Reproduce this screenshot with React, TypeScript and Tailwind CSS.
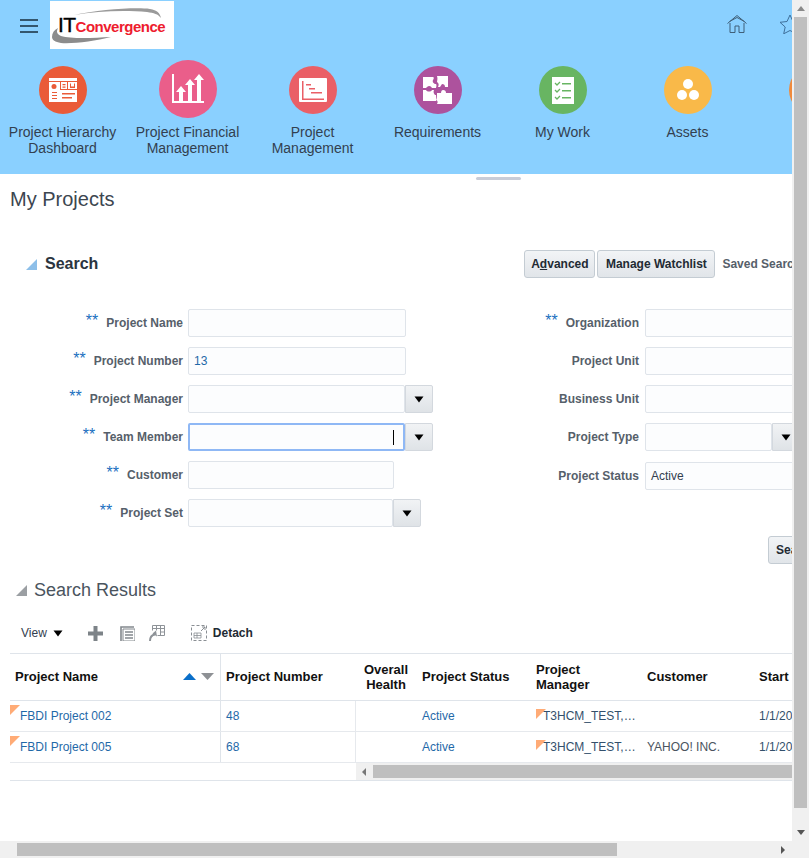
import type { ReactNode } from "react";

const font = "font-['Liberation_Sans',Arial,sans-serif]";

function NavItem({ label, color, big, children }: { label: string[]; color: string; big?: boolean; children: ReactNode }) {
  return (
    <div className="flex w-[125px] shrink-0 flex-col items-center">
      <div className="flex h-[58px] items-center justify-center">
        <div className={`flex items-center justify-center rounded-full ${color} ${big ? "-mt-[2px] h-[58px] w-[58px]" : "h-[48px] w-[48px]"}`}>
          {children}
        </div>
      </div>
      <div className="mt-[5px] text-center text-sm leading-4 text-[#33404f]">
        {label.map((l) => (
          <div key={l} className="whitespace-nowrap">{l}</div>
        ))}
      </div>
    </div>
  );
}

function Caret({ color = "#000" }: { color?: string }) {
  return (
    <svg width="10" height="7" viewBox="0 0 10 7">
      <path d="M0.5 0.5h9L5 6.500z" fill={color} />
    </svg>
  );
}

function Field({ label, stars, value, labelWidth, inputWidth, dropdown, focused }: {
  label: string;
  stars?: boolean;
  value?: string;
  labelWidth: string;
  inputWidth: string;
  dropdown?: boolean;
  focused?: boolean;
}) {
  return (
    <div className="flex h-[28px] items-center">
      <div className={`flex shrink-0 items-center justify-end whitespace-nowrap text-xs font-bold text-[#56606a] ${labelWidth}`}>
        {stars && <span className="mr-[8px] -mt-[5px] text-base leading-4 font-normal text-[#1a6fc0]">**</span>}
        {label}
      </div>
      <div className={`ml-[5px] flex h-[28px] shrink-0 items-center rounded-[2px] border bg-[#fcfdfe] px-[5px] text-xs ${inputWidth} ${focused ? "justify-end border-2 border-[#8fb8f5] pr-[9px]" : "border-[#dfe4ea]"} ${value === "13" ? "text-[#1f69a8]" : "text-[#33404f]"}`}>
        {value}
        {focused && <span className="h-[15px] w-px bg-black" />}
      </div>
      {dropdown && (
        <div className="flex h-[28px] w-[28px] shrink-0 items-center justify-center rounded-r-[2px] border border-[#d3d8de] bg-gradient-to-b from-[#f1f3f5] to-[#dfe3e7]">
          <Caret />
        </div>
      )}
    </div>
  );
}

function Corner({ className }: { className: string }) {
  return (
    <svg width="10" height="10" viewBox="0 0 10 10" className={`absolute ${className}`}>
      <path d="M0 0h10L0 10z" fill="#ffab76" />
    </svg>
  );
}

const rows = [
  { name: "FBDI Project 002", num: "48", customer: "" },
  { name: "FBDI Project 005", num: "68", customer: "YAHOO! INC." },
];

export default function App() {
  return (
    <div className={`flex h-[858px] w-[809px] flex-col overflow-hidden bg-white ${font}`}>
      <div className="flex min-h-0 flex-1">
        <div className="w-[792px] shrink-0 overflow-hidden">
          {/* top banner */}
          <header className="h-[174px] overflow-hidden bg-[#8ad0ff]">
            <div className="flex h-[61px] items-start">
              <button className="ml-[20px] mt-[19px] flex w-[18px] flex-col gap-[4px]">
                <span className="h-[2px] w-[18px] bg-[#33566e]" />
                <span className="h-[2px] w-[18px] bg-[#33566e]" />
                <span className="h-[2px] w-[18px] bg-[#33566e]" />
              </button>
              <div className="relative ml-[12px] mt-px flex h-[48px] w-[124px] items-center justify-center overflow-hidden bg-white">
                <svg width="124" height="48" viewBox="0 0 124 48" className="absolute left-0 top-0">
                  <path d="M24 14C48 9 84 6 100 8c7 1 10 4 11 9-3-4-7-5-14-6-22-2-50-1-73 3z" fill="#9a9a9a" />
                  <path d="M2 36c0-4 2-7 6-9-2 4-1 6 3 8 10 3 32 2 50 1-16 4-38 7-50 6-6-1-9-3-9-6z" fill="#8c8c8c" />
                </svg>
                <div className="relative -mt-[1px] ml-[-1px] flex items-baseline whitespace-nowrap text-[15px] font-bold tracking-[-0.5px]">
                  <span className="text-[21px] font-normal text-black [-webkit-text-stroke:0.4px_black]">IT</span>
                  <span className="text-[#ee1c2e]">Convergence</span>
                </div>
              </div>
              <div className="ml-auto mr-[-10px] mt-[14px] flex gap-[30px]">
                <svg width="22" height="20" viewBox="0 0 22 20" fill="none" stroke="#3f5f78" strokeWidth="1">
                  <path d="M1.500 9.500 11 1.500l9.500 8M3.500 7.500 11 3.500l7.500 4M4 9v9.500h5V12h4v6.500h5V9" />
                </svg>
                <svg width="24" height="20" viewBox="0 0 24 20" fill="none" stroke="#3f6f9a" strokeWidth="1">
                  <path d="M12 1l3 6.500 7 .8-5.200 4.700 1.500 6.800L12 16.500 5.700 19.800l1.500-6.800L2 8.300l7-.8z" />
                </svg>
              </div>
            </div>
            <nav className="flex">
              <NavItem label={["Project Hierarchy", "Dashboard"]} color="bg-[#ea5b38]">
                <svg width="28" height="24" viewBox="0 0 28 24">
                  <path d="M0 0h28v24H0z" fill="#fff" />
                  <path d="M0 3h28v1H0zM11 4h1v8h-1zM18 4h1v7h-1zM11 11h17v1H11z" fill="#ea5b38" />
                  <circle cx="5" cy="8.500" r="2.500" fill="#ea5b38" />
                  <path d="M3 14h5v1H3zM3 17h5v1H3zM3 20h5v1H3zM13.500 6h3v1.200h-3zM13.500 8.500h3v1.200h-3zM21 5.500h1v3h3v-3h1v4.500h-5zM13 15h13v1.500H13zM13 19h10v1.500H13z" fill="#ea5b38" />
                </svg>
              </NavItem>
              <NavItem label={["Project Financial", "Management"]} color="bg-[#ea5e8a]" big>
                <svg width="32" height="30" viewBox="0 0 32 30">
                  <path d="M0 0h2v27h30v2H0z" fill="#fff" />
                  <path d="M9 12l5 6h-3v9H7v-9H4zM18 5l5 6h-3v16h-4V11h-3zM27 0l5 6h-3v21h-4V6h-3z" fill="#fff" />
                </svg>
              </NavItem>
              <NavItem label={["Project", "Management"]} color="bg-[#ea5f66]">
                <svg width="28" height="24" viewBox="0 0 28 24">
                  <path d="M0 1a1 1 0 0 1 1-1h26a1 1 0 0 1 1 1v22a1 1 0 0 1-1 1H1a1 1 0 0 1-1-1z" fill="#fff" />
                  <path d="M3 3h1.500v17.500H25V22H3zM7 6h5v1.500H7zM10 10h6v1.500h-6zM12 14h11v1.500H12z" fill="#ea5f66" />
                </svg>
              </NavItem>
              <NavItem label={["Requirements"]} color="bg-[#ad529d]">
                <svg width="29" height="28" viewBox="0 0 29 28" fill="#fff">
                  <path d="M0 1h10c1 0 1 2 0 3-1 2 1 4 3 4 1 1 0 4 0 4H9c-1-2-3-3-5-1l-1 1H0z" />
                  <path d="M14 0h11v11h-3c0-2-1-3-3-3l-2 3h-2c1-2 1-4-1-5 0-2 1-3 0-6z" />
                  <path d="M0 14h3c1 2 5 2 6 0h2c-1 2 0 4 1 5h1v6H0z" />
                  <path d="M14 17h4c0-2 1-3 2-3 2 0 3 1 3 3h6v11H14c1-2 1-3-1-4 1-1 1-5 1-7z" />
                </svg>
              </NavItem>
              <NavItem label={["My Work"]} color="bg-[#68b562]">
                <svg width="22" height="27" viewBox="0 0 22 27">
                  <path d="M0 0h22v27H0z" fill="#fff" />
                  <path d="M3 6l2 2 3-3M3 13l2 2 3-3M3 20l2 2 3-3" fill="none" stroke="#68b562" strokeWidth="1.300" />
                  <path d="M10 6h9v1.500h-9zM10 13h9v1.500h-9zM10 20h9v1.500h-9z" fill="#68b562" />
                </svg>
              </NavItem>
              <NavItem label={["Assets"]} color="bg-[#f9b949]">
                <svg width="22" height="22" viewBox="0 0 22 22" fill="#fff">
                  <circle cx="11" cy="5" r="5" />
                  <circle cx="5" cy="16" r="5" />
                  <circle cx="17" cy="16" r="5" />
                </svg>
              </NavItem>
              <NavItem label={[""]} color="bg-[#f08a3c]">
                <span />
              </NavItem>
            </nav>
          </header>

          {/* splitter handle */}
          <div className="flex h-[6px] items-start pl-[476px] pt-[3px]">
            <div className="h-[3px] w-[45px] rounded-full bg-[#c8ccd8]" />
          </div>

          <main className="pl-[10px]">
            <h1 className="mt-[7px] text-xl leading-[24px] text-[#3c4650]">My Projects</h1>

            {/* search header */}
            <div className="mt-[39px] flex h-[28px] items-center">
              <svg width="11" height="11" viewBox="0 0 11 11" className="ml-[16px] mt-[1px] shrink-0">
                <path d="M11 0v11H0z" fill="#8dbfe9" />
              </svg>
              <h2 className="ml-[8px] text-base font-bold text-[#2b3440]">Search</h2>
              <div className="ml-[426px] flex shrink-0 items-center whitespace-nowrap text-xs font-bold text-[#222a33]">
                <button className="h-[28px] w-[71px] rounded-[3px] border border-[#c4ccd3] bg-gradient-to-b from-[#f2f4f6] to-[#e1e5e9]">
                  A<span className="underline">d</span>vanced
                </button>
                <button className="ml-[2px] h-[28px] w-[118px] rounded-[3px] border border-[#c4ccd3] bg-gradient-to-b from-[#f2f4f6] to-[#e1e5e9]">
                  Manage Watchlist
                </button>
                <span className="ml-[7px] text-[#56606a]">Saved Search</span>
              </div>
            </div>

            {/* search form */}
            <div className="mt-[31px] flex">
              <div className="flex w-[430px] shrink-0 flex-col gap-[10px]">
                <Field label="Project Name" stars labelWidth="w-[173px]" inputWidth="w-[218px]" />
                <Field label="Project Number" stars value="13" labelWidth="w-[173px]" inputWidth="w-[218px]" />
                <Field label="Project Manager" stars labelWidth="w-[173px]" inputWidth="w-[217px]" dropdown />
                <Field label="Team Member" stars labelWidth="w-[173px]" inputWidth="w-[217px]" dropdown focused />
                <Field label="Customer" stars labelWidth="w-[173px]" inputWidth="w-[206px]" />
                <Field label="Project Set" stars labelWidth="w-[173px]" inputWidth="w-[205px]" dropdown />
              </div>
              <div className="flex shrink-0 flex-col gap-[10px]">
                <Field label="Organization" stars labelWidth="w-[200px] pr-[1px]" inputWidth="w-[218px]" />
                <Field label="Project Unit" labelWidth="w-[200px] pr-[1px]" inputWidth="w-[218px]" />
                <Field label="Business Unit" labelWidth="w-[200px] pr-[1px]" inputWidth="w-[218px]" />
                <Field label="Project Type" labelWidth="w-[200px] pr-[1px]" inputWidth="w-[127px]" dropdown />
                <div className="mt-px">
                  <Field label="Project Status" value="Active" labelWidth="w-[200px] pr-[1px]" inputWidth="w-[218px]" />
                </div>
              </div>
            </div>

            <div className="mt-[9px] flex justify-end">
              <button className="-mr-[26px] h-[28px] w-[50px] rounded-[3px] border border-[#c4ccd3] bg-gradient-to-b from-[#f2f4f6] to-[#e1e5e9] pl-[7px] text-left text-xs font-bold text-[#222a33]">
                Search
              </button>
            </div>

            {/* results */}
            <div className="mt-[14px] flex h-[24px] items-center">
              <svg width="11" height="11" viewBox="0 0 11 11" className="ml-[6px] shrink-0">
                <path d="M11 0v11H0z" fill="#9b9fa3" />
              </svg>
              <h2 className="ml-[7px] text-lg text-[#4a545e]">Search Results</h2>
            </div>

            <div className="mt-[20px] flex h-[22px] items-center text-xs">
              <span className="ml-[11px] text-[#33404f]">View</span>
              <span className="ml-[6px] flex"><Caret /></span>
              <svg width="15" height="15" viewBox="0 0 15 15" className="ml-[25px] shrink-0">
                <path d="M5.500 0h4v5.500H15v4H9.500V15h-4V9.500H0v-4h5.500z" fill="#7d8388" />
              </svg>
              <svg width="15" height="15" viewBox="0 0 15 15" className="ml-[17px] shrink-0" fill="none" stroke="#83888d">
                <path d="M1 15V1h13" strokeWidth="1.600" />
                <path d="M3 3h12v12H3z" strokeWidth="1" />
                <path d="M5 6h8M5 9h8M5 12h8" strokeWidth="1.500" />
              </svg>
              <svg width="16" height="17" viewBox="0 0 16 17" className="ml-[14px] shrink-0" fill="none" stroke="#8e9398" strokeWidth="1">
                <path d="M3.500 .5h12v10h-7M3.500 .5v5M3.500 3.500h12M7.500 .5v5M11.500 .5v10M11.500 7h4" />
                <path d="M1 16c0-4 2-6 5-6.500" strokeWidth="2" />
                <path d="M3.500 8.500 7 5.500l1 6z" fill="#8e9398" stroke="none" />
              </svg>
              <svg width="16" height="16" viewBox="0 0 16 16" className="ml-[26px] shrink-0" fill="none" stroke="#8a8f94">
                <path d="M.5 .5h15v15H.5z" strokeDasharray="3 2" />
                <path d="M10 6l4-4M11 2h3v3" />
                <path d="M3 8h7v5H3zM3 10.500h7M6 8v5" strokeWidth=".8" />
              </svg>
              <span className="ml-[6px] font-bold text-[#222a33]">Detach</span>
            </div>

            {/* results table */}
            <div className="mt-[9px] w-[840px] border-t border-[#dfe4ea]">
              <div className="flex h-[47px] items-center border-b border-[#dfe4ea] text-[13px] leading-[15px] font-bold text-[#111]">
                <div className="flex h-full w-[211px] shrink-0 items-center border-r border-[#dfe4ea] pb-[2px] pl-[5px]">
                  Project Name
                  <span className="ml-auto mr-[6px] flex items-center gap-[5px]">
                    <svg width="13" height="7" viewBox="0 0 13 7"><path d="M6.500 0 13 7H0z" fill="#0a6fc9" /></svg>
                    <svg width="13" height="7" viewBox="0 0 13 7"><path d="M0 0h13L6.500 7z" fill="#8e9195" /></svg>
                  </span>
                </div>
                <div className="w-[135px] shrink-0 pb-[2px] pl-[5px]">Project Number</div>
                <div className="w-[60px] shrink-0 text-center">Overall<br />Health</div>
                <div className="w-[114px] shrink-0 pb-[2px] pl-[6px]">Project Status</div>
                <div className="w-[111px] shrink-0 pl-[6px]">Project<br />Manager</div>
                <div className="w-[112px] shrink-0 pb-[2px] pl-[6px]">Customer</div>
                <div className="pb-[2px] pl-[6px]">Start</div>
              </div>
              {rows.map((r) => (
                <div key={r.name} className="flex h-[31px] items-center border-b border-[#e6e9ed] text-xs text-[#1f69a8]">
                  <div className="relative flex h-full w-[211px] shrink-0 items-center border-r border-[#dfe4ea] pl-[10px]">
                    <Corner className="left-0 top-[4px]" />
                    {r.name}
                  </div>
                  <div className="flex h-full w-[135px] shrink-0 items-center border-r border-[#e6e9ed] pl-[5px]">{r.num}</div>
                  <div className="w-[60px] shrink-0" />
                  <div className="w-[114px] shrink-0 pl-[6px]">Active</div>
                  <div className="relative flex h-full w-[111px] shrink-0 items-center pl-[13px] text-[#33506c]">
                    <Corner className="left-[6px] top-[8px]" />
                    T3HCM_TEST,…
                  </div>
                  <div className="w-[112px] shrink-0 pl-[6px] text-[#4a545e]">{r.customer}</div>
                  <div className="pl-[6px] text-[#33506c]">1/1/20</div>
                </div>
              ))}
              <div className="flex h-[18px] border-b border-[#dfe4ea]">
                <div className="w-[346px] shrink-0" />
                <div className="flex h-full w-[437px] items-center bg-[#f0f0f0]">
                  <svg width="17" height="8" viewBox="0 0 17 8"><path d="M10 0v8L6 4z" fill="#777" /></svg>
                  <div className="h-[13px] flex-1 bg-[#bfbfbf]" />
                </div>
              </div>
            </div>
          </main>
        </div>

        {/* page scrollbar, vertical */}
        <div className="flex w-[17px] shrink-0 flex-col items-center bg-[#f0f0f0]">
          <div className="flex h-[17px] shrink-0 items-center justify-center">
            <svg width="8" height="5" viewBox="0 0 8 5"><path d="M4 0l4 5H0z" fill="#8a8a8a" /></svg>
          </div>
          <div className="h-[791px] w-[13px] shrink-0 bg-[#bfbfbf]" />
          <div className="mt-auto flex h-[17px] shrink-0 items-center justify-center">
            <svg width="8" height="5" viewBox="0 0 8 5"><path d="M0 0h8L4 5z" fill="#555" /></svg>
          </div>
        </div>
      </div>

      {/* page scrollbar, horizontal */}
      <div className="flex h-[17px] shrink-0 items-center bg-[#f0f0f0]">
        <div className="w-[17px]" />
        <div className="h-[13px] w-[600px] bg-[#bfbfbf]" />
        <div className="ml-auto flex w-[34px] justify-start">
          <svg width="17" height="8" viewBox="0 0 17 8"><path d="M6 0v8l4-4z" fill="#555" /></svg>
        </div>
      </div>
    </div>
  );
}
